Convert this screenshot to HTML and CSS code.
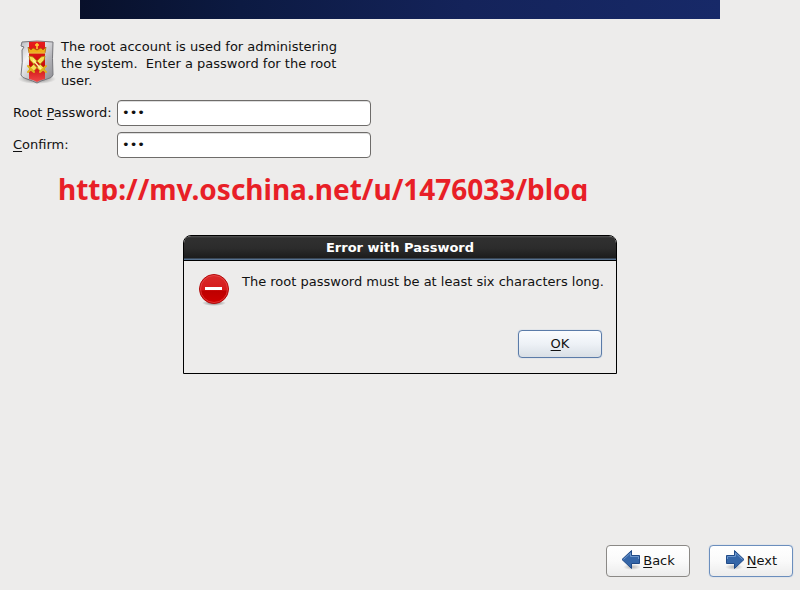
FILE: index.html
```
<!DOCTYPE html>
<html lang="en">
<head>
	<meta charset="utf-8">
	<title>Root Password</title>
	<link rel="stylesheet" href="styles.css">
</head>
<body>
	<div class="banner"></div>

	<form class="page">
		<div class="intro">
			<svg class="shield" viewBox="0 0 40 50">
				<defs>
					<linearGradient id="steel" x1="0" y1="0" x2="1" y2="1">
						<stop offset="0" stop-color="#b9b9bd"/>
						<stop offset=".3" stop-color="#f3f3f5"/>
						<stop offset=".65" stop-color="#b5b5ba"/>
						<stop offset="1" stop-color="#88888e"/>
					</linearGradient>
					<linearGradient id="red" x1="0" y1="0" x2="0" y2="1">
						<stop offset="0" stop-color="#e81c1c"/>
						<stop offset=".6" stop-color="#cc0c0c"/>
						<stop offset="1" stop-color="#f04848"/>
					</linearGradient>
					<radialGradient id="shade">
						<stop offset="0" stop-color="#000" stop-opacity=".5"/>
						<stop offset="1" stop-color="#000" stop-opacity="0"/>
					</radialGradient>
				</defs>
				<ellipse cx="20" cy="41" rx="19" ry="5" fill="url(#shade)"/>
				<path d="M5 4Q20 2 36 4Q35 20 36 37Q35 40 30 41Q23 43 20 45Q16 43 10 41Q5 40 4 37Q6 24 5 12L7 9L4 8Z" fill="url(#steel)" stroke="#77777c"/>
				<path d="M12 4Q20 3 28 4V41Q23 42 20 44Q17 42 12 41Z" fill="url(#red)"/>
				<path d="M11 9L14 12L16 10L20 12L24 10L26 12L29 9L28 15H12Z" fill="#f0ac18" stroke="#a85c05" stroke-width=".7"/>
				<path d="M20 5V11M18 7H22" stroke="#ffd23a" stroke-width="1.500"/>
				<path d="M12 15H28" stroke="#ffd34a"/>
				<path d="M12 31L24 19L28 18L27 22L16 34ZM28 31L16 19L12 18L13 22L24 34Z" fill="#f8df58" stroke="#b08512" stroke-width=".8"/>
				<path d="M16 22L24 31" stroke="#fff3a0" stroke-width="1.500"/>
				<path d="M11 28L17 34M29 28L23 34M14 31L11 34M26 31L29 34" stroke="#dfb020" stroke-width="2" stroke-linecap="round"/>
			</svg>
			<p class="text">The root account is used for administering the system.&nbsp; Enter a password for the root user.</p>
		</div>
		<div class="fields">
			<label for="password">Root <u>P</u>assword:</label>
			<input class="entry" type="password" id="password" value="abc">
			<label for="confirm"><u>C</u>onfirm:</label>
			<input class="entry" type="password" id="confirm" value="abc">
		</div>
	</form>

	<p class="address">http://my.oschina.net/u/1476033/blog</p>

	<div class="dialog" role="dialog" aria-labelledby="title">
		<h1 class="title" id="title">Error with Password</h1>
		<div class="content">
			<div class="message">
				<svg class="stop" viewBox="0 0 32 34">
					<defs>
						<linearGradient id="stopFill" x1="0" y1="0" x2="0" y2="1">
							<stop offset="0" stop-color="#d92a2a"/>
							<stop offset=".54" stop-color="#d61a1a"/>
							<stop offset=".56" stop-color="#bd0000"/>
							<stop offset="1" stop-color="#cf0000"/>
						</linearGradient>
					</defs>
					<ellipse cx="16" cy="30" rx="12" ry="3" fill="url(#shade)"/>
					<circle cx="16" cy="16" r="14.500" fill="url(#stopFill)" stroke="#b20808"/>
					<circle cx="16" cy="16" r="13.500" fill="none" stroke="#ee5555" stroke-opacity=".6"/>
					<rect x="7" y="14" width="17" height="3" fill="#fff"/>
				</svg>
				<p>The root password must be at least six characters long.</p>
			</div>
			<button class="button ok" type="button"><span><u>O</u>K</span></button>
		</div>
	</div>

	<div class="actions">
		<button class="button" type="button">
			<svg class="arrow" viewBox="0 0 20 22">
				<ellipse cx="11" cy="18" rx="9" ry="3" fill="url(#shade)" opacity=".5"/>
				<path d="M1 10.500L10.500 1.500V6.500H18.500V14.500H10.500V19.500Z" fill="#3566a8" stroke="#204a87"/>
				<path d="M2.500 10.500L9.500 4V7.500H17.500V10" fill="none" stroke="#6c96cc"/>
			</svg>
			<span><u>B</u>ack</span>
		</button>
		<button class="button focused" type="button">
			<svg class="arrow" viewBox="0 0 20 22">
				<ellipse cx="9" cy="18" rx="9" ry="3" fill="url(#shade)" opacity=".5"/>
				<path d="M19 10.500L9.500 1.500V6.500H1.500V14.500H9.500V19.500Z" fill="#3566a8" stroke="#204a87"/>
				<path d="M17.500 10.500L10.500 4V7.500H2.500V10" fill="none" stroke="#6c96cc"/>
			</svg>
			<span><u>N</u>ext</span>
		</button>
	</div>
</body>
</html>
```

FILE: styles.css
```
*{
	box-sizing: border-box;
}
body{
	display: flex;
	flex-direction: column;
	min-height: 100vh;
	margin: 0;
	background-color: #edeceb;
	color: #111;
	font: 13px/17px "DejaVu Sans", sans-serif;
}
p, h1{
	margin: 0;
}
u{
	text-underline-offset: 2px;
}
.banner{
	height: 19px;
	margin: 0 80px;
	background: linear-gradient(to right, #08102a, #0c1a42 25%, #14235a 60%, #172968);
}
.page{
	padding: 19px 13px 0;
}
.intro{
	display: flex;
	gap: 4px;
	padding-left: 4px;
}
.shield{
	width: 40px;
	height: 50px;
}
.text{
	max-width: 290px;
}
.fields{
	display: grid;
	grid-template-columns: 98px 254px;
	gap: 6px;
	align-items: center;
	margin-top: 11px;
}
.fields label{
	padding-bottom: 1px;
	white-space: nowrap;
}
.entry{
	width: 100%;
	height: 26px;
	padding: 0 4px 2px;
	border: 1px solid #6e6c6a;
	border-radius: 4px;
	background-color: #fff;
	box-shadow: inset 0 1px #ddd;
	color: #111;
	font: inherit;
}
.address{
	height: 26px;
	margin: 17px 0 34px 58px;
	overflow: hidden;
	color: #e81f27;
	font: bold 28px/28px "Noto Sans", sans-serif;
}
.dialog{
	width: 434px;
	max-width: 100%;
	margin: 0 auto;
	border: 1px solid #000;
	border-radius: 8px 8px 0 0;
	overflow: hidden;
}
.title{
	height: 25px;
	border-bottom: 1px solid #000;
	background: linear-gradient(#555, #303030 2px, #2c2c2c 50%, #1c1c1c 22px, #56718f 23px);
	color: #fff;
	font-size: 13px;
	line-height: 24px;
	text-align: center;
}
.content{
	display: flex;
	flex-direction: column;
	gap: 23px;
	padding: 12px 14px 15px;
}
.message{
	display: flex;
	gap: 12px;
	white-space: nowrap;
}
.stop{
	flex: none;
	width: 32px;
	height: 34px;
}
.button{
	display: flex;
	align-items: center;
	justify-content: center;
	gap: 2px;
	width: 84px;
	height: 32px;
	padding: 0 0 2px;
	border: 1px solid #8b8986;
	border-radius: 4px;
	background: linear-gradient(#fff, #fafafa 50%, #ececec);
	color: #111;
	font: inherit;
}
.focused{
	border-color: #6b8ebd;
	box-shadow: 0 0 1px #86a9d8;
}
.ok{
	align-self: flex-end;
	height: 28px;
	border-color: #5b7ba8;
	background: linear-gradient(#fbfcfe, #edf1f6 50%, #d9dfe5);
	box-shadow: 0 0 1px #86a9d8;
}
.arrow{
	width: 20px;
	height: 22px;
}
.actions{
	display: flex;
	justify-content: flex-end;
	gap: 19px;
	margin-top: auto;
	padding: 12px 7px 13px;
}
```
